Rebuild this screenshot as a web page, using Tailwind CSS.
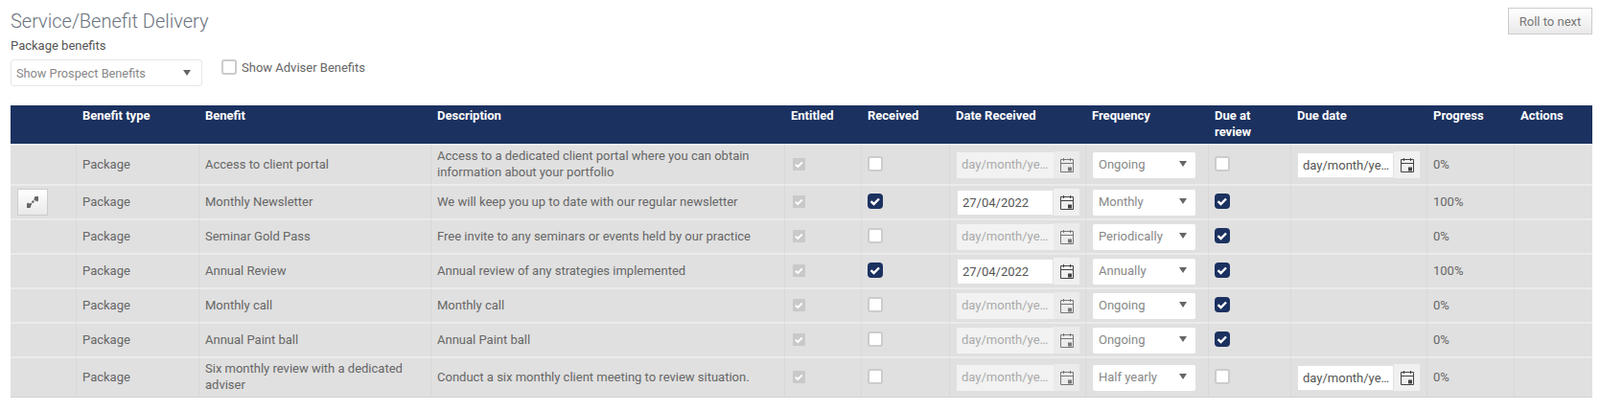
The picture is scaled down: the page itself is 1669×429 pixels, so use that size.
<!DOCTYPE html>
<html lang="en">
<head>
  <meta charset="UTF-8" />
  <title>Service/Benefit Delivery</title>
  <script src="https://cdn.jsdelivr.net/npm/@tailwindcss/browser@4"></script>
</head>
<body class="bg-white font-['Roboto',sans-serif] text-[13px] leading-[17px] text-[#666]">
  <svg class="hidden">
    <symbol id="cal" viewBox="0 0 14 15">
      <path d="M0.5 1.5h13v13h-13z M0.5 5.5h13" fill="none" stroke="currentColor" stroke-width="1"/>
      <path d="M3.5 0v3 M10.5 0v3" fill="none" stroke="currentColor" stroke-width="1"/>
      <rect x="8" y="9.5" width="4" height="4" fill="currentColor"/>
    </symbol>
  </svg>

  <div class="pt-[8px] pl-[11px] pr-[8px]">
    <div class="flex justify-between items-start">
      <h1 class="mt-[2px] text-[20px] leading-[24px] font-light text-[#6b7280]">Service/Benefit Delivery</h1>
      <button class="w-[88px] h-[28px] border border-[#ccc] bg-gradient-to-b from-white to-[#e9e9e9] text-[#777]">Roll to next</button>
    </div>
    <div class="mt-[3px] h-[17px] text-[#555]">Package benefits</div>
    <div class="mt-[6px] flex items-start">
      <div class="w-[200px] h-[28px] border border-[#e6e6e6] rounded-[3px] pl-[5px] pr-[11px] flex items-center justify-between text-[12.75px] text-[#888]">
        <span>Show Prospect Benefits</span>
        <span class="w-0 h-0 border-x-[4px] border-x-transparent border-t-[6px] border-t-[#666]"></span>
      </div>
      <div class="ml-[20px] w-[16px] h-[16px] rounded-[3px] border-2 border-[#ccc] bg-white"></div>
      <span class="ml-[5px] text-[#666]">Show Adviser Benefits</span>
    </div>

    <table class="mt-[20px] w-[1650px] table-fixed border-separate border-spacing-0">
      <colgroup>
        <col class="w-[68px]"><col class="w-[128px]"><col class="w-[242px]"><col class="w-[369px]">
        <col class="w-[80px]"><col class="w-[92px]"><col class="w-[142px]"><col class="w-[128px]">
        <col class="w-[86px]"><col class="w-[142px]"><col class="w-[91px]"><col class="w-[82px]">
      </colgroup>
      <thead class="bg-[#1b3160] text-white">
        <tr class="h-[40px] align-top text-left font-bold">
          <th></th>
          <th class="px-[7px] pt-[2px]">Benefit type</th>
          <th class="px-[7px] pt-[2px]">Benefit</th>
          <th class="px-[7px] pt-[2px]">Description</th>
          <th class="px-[7px] pt-[2px]">Entitled</th>
          <th class="px-[7px] pt-[2px]">Received</th>
          <th class="px-[7px] pt-[2px]">Date Received</th>
          <th class="px-[7px] pt-[2px]">Frequency</th>
          <th class="px-[7px] pt-[2px]">Due at review</th>
          <th class="px-[7px] pt-[2px]">Due date</th>
          <th class="px-[7px] pt-[2px]">Progress</th>
          <th class="px-[7px] pt-[2px]">Actions</th>
        </tr>
      </thead>
      <tbody id="rows"></tbody>
    </table>
  </div>

  <script>
    const benefits = [
      { h: "h-[42px]", name: "Access to client portal", desc: "Access to a dedicated client portal where you can obtain information about your portfolio", freq: "Ongoing", date: "", due: false, progress: "0%" },
      { h: "h-[36px]", name: "Monthly Newsletter", desc: "We will keep you up to date with our regular newsletter", freq: "Monthly", date: "27/04/2022", due: true, progress: "100%", expand: true },
      { h: "h-[36px]", name: "Seminar Gold Pass", desc: "Free invite to any seminars or events held by our practice", freq: "Periodically", date: "", due: true, progress: "0%" },
      { h: "h-[36px]", name: "Annual Review", desc: "Annual review of any strategies implemented", freq: "Annually", date: "27/04/2022", due: true, progress: "100%" },
      { h: "h-[36px]", name: "Monthly call", desc: "Monthly call", freq: "Ongoing", date: "", due: true, progress: "0%" },
      { h: "h-[36px]", name: "Annual Paint ball", desc: "Annual Paint ball", freq: "Ongoing", date: "", due: true, progress: "0%" },
      { h: "h-[43px]", name: "Six monthly review with a dedicated adviser", desc: "Conduct a six monthly client meeting to review situation.", freq: "Half yearly", date: "", due: false, progress: "0%", last: true }
    ];

    const check = `<svg viewBox="0 0 16 16" class="w-full h-full"><path d="M3.5 8.2l3 2.8 5.5-5.5" fill="none" stroke="#fff" stroke-width="2.4"/></svg>`;

    function box(on) {
      return on
        ? `<div class="w-[16px] h-[16px] mb-[2px] rounded-[4px] bg-[#1b3160]">${check}</div>`
        : `<div class="w-[16px] h-[16px] mb-[2px] rounded-[3px] border-2 border-[#ccc] bg-white"></div>`;
    }

    function dateInput(value, enabled) {
      const field = enabled
        ? "bg-white border border-[#e2e2e2] text-[#555] pr-[2px]"
        : "bg-[#f2f2f2] text-[#aaa] pr-[4px]";
      const addon = enabled ? "bg-[#f0f0f0] text-[#444]" : "bg-[#ebebeb] text-[#777]";
      return `<div class="flex items-center">
        <div class="w-[101px] h-[27px] pl-[5px] leading-[25px] truncate ${field}">${value || "day/month/year"}</div>
        <div class="w-[27px] h-[28px] flex items-center justify-center ${addon}"><svg class="w-[14px] h-[15px]"><use href="#cal"/></svg></div>
      </div>`;
    }

    document.getElementById("rows").innerHTML = benefits.map((b) => {
      const td = `border-t-2 border-t-[#ebebeb] border-l border-l-[#d8d8d8] ${b.last ? "border-b border-b-[#d0d0d0]" : ""} px-[6px] align-middle`;
      const text = `${td} pb-[2px]`;
      return `<tr class="${b.h} bg-[#e0e0e0]">
        <td class="border-t-2 border-t-[#ebebeb] ${b.last ? "border-b border-b-[#d0d0d0]" : ""} pl-[7px]">${b.expand ? `<div class="w-[32px] h-[28px] border border-[#ccc] bg-gradient-to-b from-white to-[#e9e9e9] flex items-center justify-center"><svg viewBox="0 0 12 12" class="w-[12px] h-[12px] text-[#666]"><path d="M0 12v-4.5l1.5-1 3 3-1 2.5z M12 0v4.5l-1.5 1-3-3 1-2.5z" fill="currentColor"/><path d="M3 9l6-6" stroke="currentColor" stroke-width="2" stroke-dasharray="2.5 1"/></svg></div>` : ""}</td>
        <td class="${text}">Package</td>
        <td class="${text}">${b.name}</td>
        <td class="${text}">${b.desc}</td>
        <td class="${td} pl-[8px]"><div class="w-[13px] h-[13px] mb-[2px] rounded-[1px] bg-[#c9c9c9]">${check}</div></td>
        <td class="${td}">${box(b.date !== "")}</td>
        <td class="${td} pl-[7px]">${dateInput(b.date, b.date !== "")}</td>
        <td class="${td} pl-[7px]"><div class="w-[107px] h-[27px] rounded-[2px] bg-white pl-[6px] pr-[9px] flex items-center justify-between text-[#888]"><span class="pb-[1px]">${b.freq}</span><span class="w-0 h-0 border-x-[4px] border-x-transparent border-t-[6px] border-t-[#666] mb-[2px]"></span></div></td>
        <td class="${td}">${box(b.due)}</td>
        <td class="${td}">${b.due ? "" : dateInput("", true)}</td>
        <td class="${text}">${b.progress}</td>
        <td class="${td}"></td>
      </tr>`;
    }).join("");
  </script>
</body>
</html>
